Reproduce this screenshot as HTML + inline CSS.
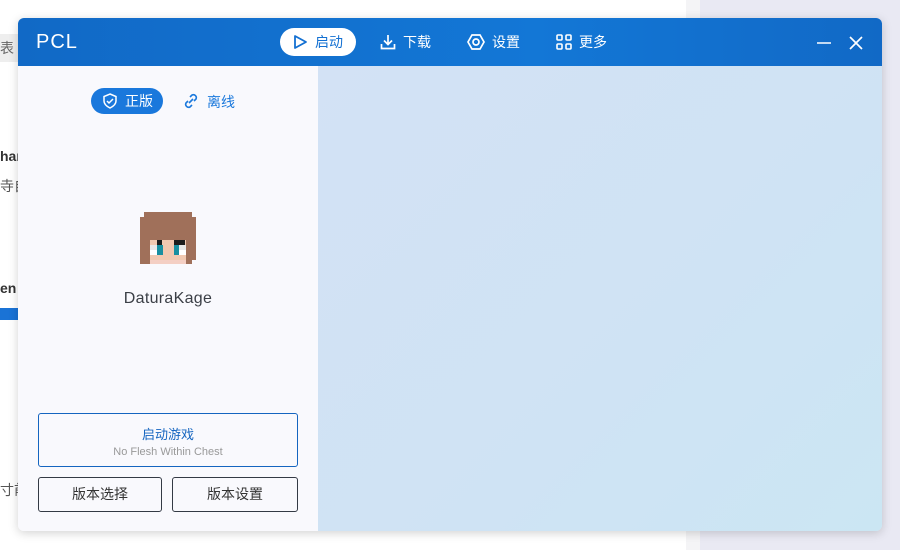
<!DOCTYPE html><html><head><meta charset="utf-8"><style>
*{margin:0;padding:0;box-sizing:border-box}
body{width:900px;height:550px;overflow:hidden;background:#f4f4f6;font-family:"Liberation Sans","Noto Sans CJK SC",sans-serif;position:relative}
.bgr{position:absolute;left:700px;top:0;width:200px;height:550px;background:#e9e9f3}
.bgl{position:absolute;left:0;top:0;width:686px;height:550px;background:#fff}
.win{position:absolute;left:18px;top:18px;width:864px;height:513px;border-radius:6px;overflow:hidden;box-shadow:0 2px 10px rgba(0,0,0,.18)}
.tb{position:absolute;left:0;top:0;width:864px;height:48px;background:linear-gradient(90deg,#1169c6,#1377d6 60%,#1169c6)}
.logo{position:absolute;left:18px;top:13px;color:#fff;font-size:20px;letter-spacing:1px}
.nav{position:absolute;top:10px;height:28px;display:flex;align-items:center;color:#fff;font-size:14px}
.nav svg{margin-right:7px}
.left{position:absolute;left:0;top:48px;width:300px;height:465px;background:#f9f9fd}
.right{position:absolute;left:300px;top:48px;width:564px;height:465px;background:linear-gradient(135deg,#d3e2f5,#cfe3f4 60%,#cbe6f3)}
.btn{position:absolute;border:1px solid #343a45;border-radius:3px;font-size:14px;color:#333;text-align:center}
</style></head><body>
<div class="bgl"></div><div class="bgr"></div>
<div style="position:absolute;left:0;top:34px;width:18px;height:28px;background:#eee;font-size:14px;color:#666;line-height:28px">表</div>
<div style="position:absolute;left:0;top:148px;font-size:14px;font-weight:bold;color:#333">han</div>
<div style="position:absolute;left:0;top:176px;font-size:14px;color:#555">寺自</div>
<div style="position:absolute;left:0;top:280px;font-size:14px;font-weight:bold;color:#333">en</div>
<div style="position:absolute;left:0;top:308px;width:18px;height:12px;background:#1a73d6"></div>
<div style="position:absolute;left:0;top:480px;font-size:14px;color:#555">寸前</div>
<div class="win">
<div class="tb">
<div class="logo">PCL</div>
<div class="nav" style="left:262px;width:76px;background:#fff;border-radius:14px;color:#1370d2;padding-left:12px"><svg width="16" height="16" viewBox="0 0 16 16"><path d="M3 2L14 8L3 14Z" fill="none" stroke="#1370d2" stroke-width="1.8" stroke-linejoin="round"/></svg>启动</div>
<div class="nav" style="left:362px"><svg width="16" height="16" viewBox="0 0 16 16" fill="none" stroke="#fff" stroke-width="1.7"><path d="M8 1v9M4 6.5L8 10.5 12 6.5M1.5 10v4.5h13V10"/></svg>下载</div>
<div class="nav" style="left:449px"><svg width="18" height="18" viewBox="0 0 18 18" fill="none" stroke="#fff" stroke-width="1.7"><path d="M5 2h8l4 7-4 7H5L1 9z"/><circle cx="9" cy="9" r="3"/></svg>设置</div>
<div class="nav" style="left:538px"><svg width="16" height="16" viewBox="0 0 16 16" fill="none" stroke="#fff" stroke-width="1.6"><rect x="1" y="1" width="5" height="5" rx="1"/><rect x="10" y="1" width="5" height="5" rx="1"/><rect x="1" y="10" width="5" height="5" rx="1"/><rect x="10" y="10" width="5" height="5" rx="1"/></svg>更多</div>
<svg style="position:absolute;left:798px;top:17px" width="16" height="16"><path d="M1 8h14" stroke="#fff" stroke-width="1.6"/></svg>
<svg style="position:absolute;left:830px;top:17px" width="16" height="16"><path d="M2 2L14 14M14 2L2 14" stroke="#fff" stroke-width="1.7"/></svg>
</div>
<div class="left">
<div style="position:absolute;left:73px;top:22px;width:72px;height:26px;background:#1a78dc;border-radius:13px;color:#fff;font-size:14px;line-height:26px;padding-left:34px">正版</div>
<svg style="position:absolute;left:84px;top:27px" width="16" height="16" viewBox="0 0 16 16" fill="none" stroke="#fff" stroke-width="1.5"><path d="M8 1L14 3.5V8c0 3.5-3 5.5-6 7-3-1.5-6-3.5-6-7V3.5z"/><path d="M5 8l2 2 4-4"/></svg>
<svg style="position:absolute;left:165px;top:27px" width="16" height="16" viewBox="0 0 16 16" fill="none" stroke="#1a78dc" stroke-width="1.6"><path d="M7 4l2-2a3 3 0 014 4l-2 2M9 12l-2 2a3 3 0 01-4-4l2-2M6 10l4-4"/></svg>
<div style="position:absolute;left:189px;top:26px;color:#1a78dc;font-size:14px">离线</div>
<svg style="position:absolute;left:122px;top:146px" width="56" height="52" viewBox="0 0 56 52" shape-rendering="crispEdges">
<rect x="4" y="0" width="48" height="52" fill="#a0705a"/><rect x="0" y="5" width="4" height="47" fill="#a0705a"/><rect x="52" y="5" width="4" height="43" fill="#a0705a"/>
<rect x="10" y="28" width="36" height="24" fill="#f0c8b0"/>
<rect x="10" y="48" width="36" height="4" fill="#f4cfc4"/>
<rect x="17" y="28" width="5" height="5" fill="#1c1c1c"/><rect x="34" y="28" width="11" height="5" fill="#1c1c1c"/>
<rect x="10" y="33" width="7" height="10" fill="#e8e8e8"/><rect x="17" y="33" width="6" height="10" fill="#178fa0"/>
<rect x="34" y="33" width="5" height="10" fill="#178fa0"/><rect x="39" y="33" width="7" height="10" fill="#e8e8e8"/>
<rect x="10" y="38" width="7" height="5" fill="#fff"/><rect x="39" y="38" width="7" height="5" fill="#fff"/>
</svg>
<div style="position:absolute;left:0;width:300px;top:224px;text-align:center;font-size:16px;color:#3b3f46;letter-spacing:.3px">DaturaKage</div>
<div class="btn" style="left:20px;top:347px;width:260px;height:54px;border-color:#1565c0"><div style="color:#1565c0;margin-top:10px;font-size:13px">启动游戏</div><div style="color:#999;font-size:11px;margin-top:3px">No Flesh Within Chest</div></div>
<div class="btn" style="left:20px;top:411px;width:124px;height:35px;line-height:33px">版本选择</div>
<div class="btn" style="left:154px;top:411px;width:126px;height:35px;line-height:33px">版本设置</div>
</div>
<div class="right"></div>
</div>
</body></html>
